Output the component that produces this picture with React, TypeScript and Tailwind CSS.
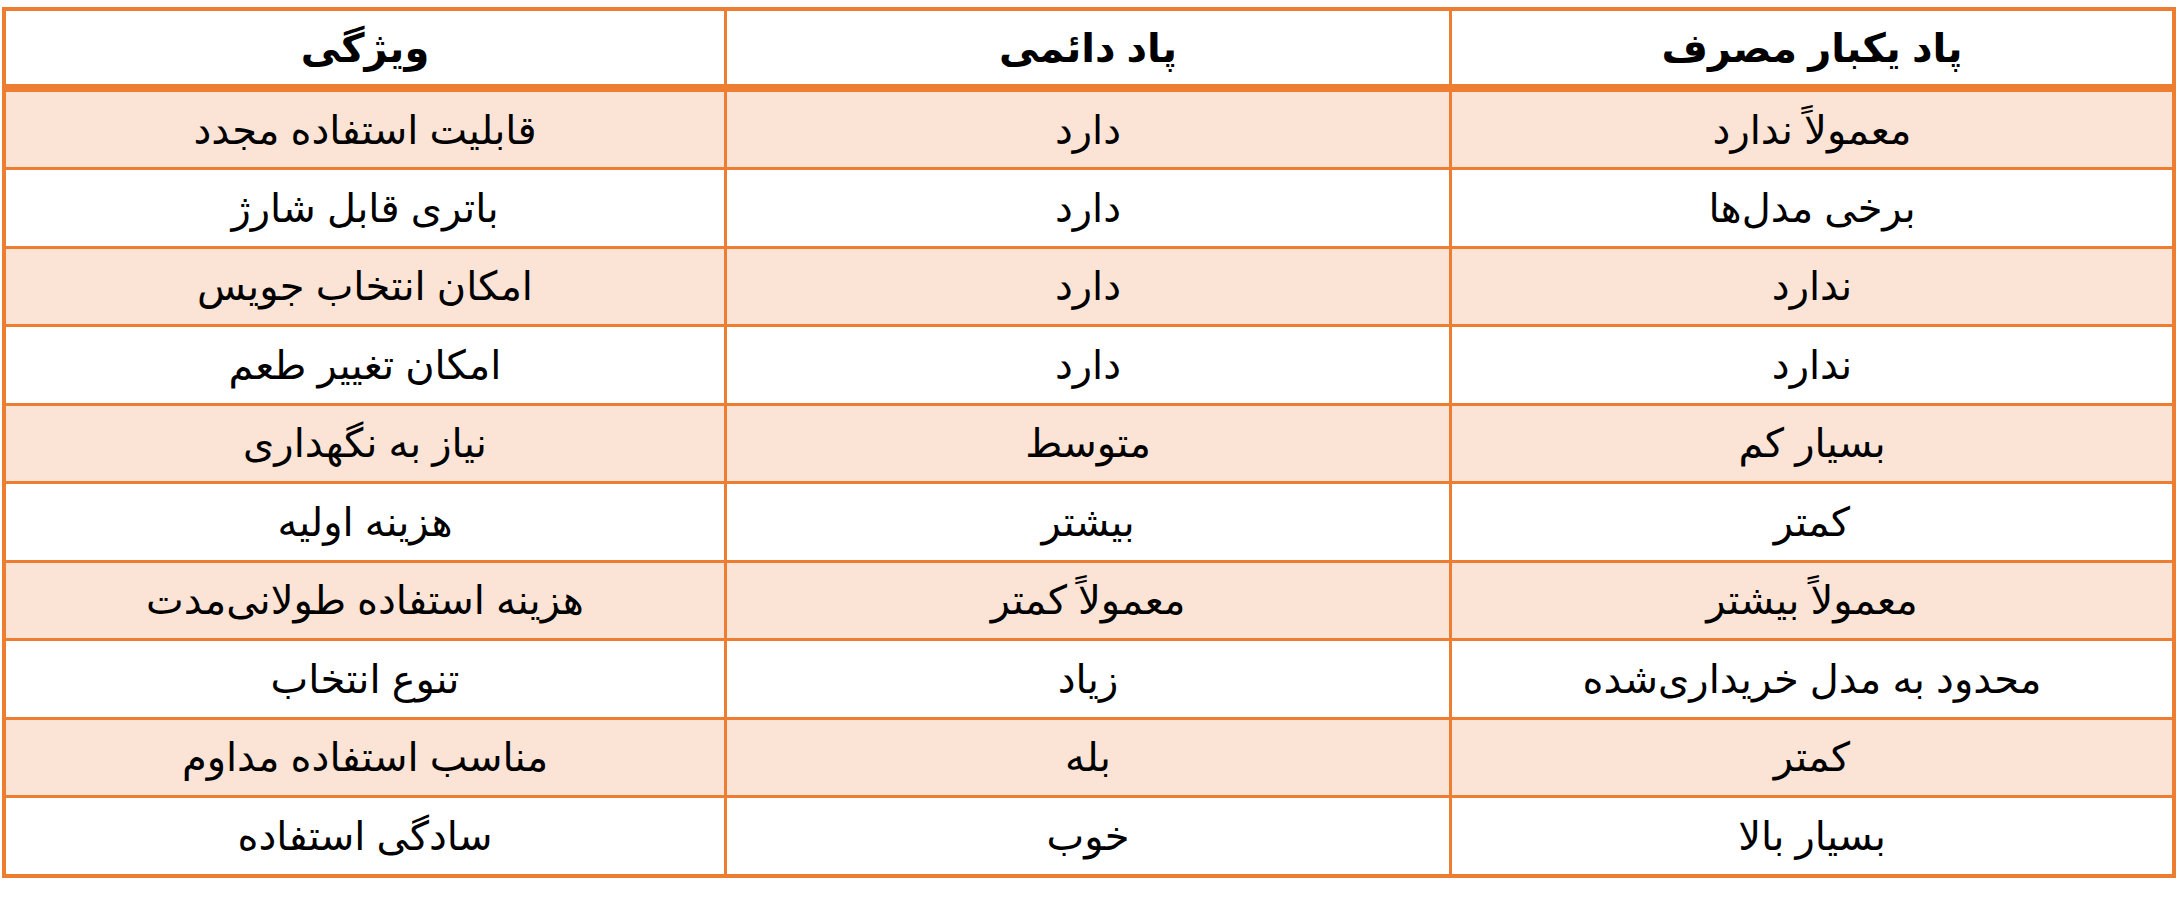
const rows: [string, string, string][] = [
  ["قابلیت استفاده مجدد", "دارد", "معمولاً ندارد"],
  ["باتری قابل شارژ", "دارد", "برخی مدل‌ها"],
  ["امکان انتخاب جویس", "دارد", "ندارد"],
  ["امکان تغییر طعم", "دارد", "ندارد"],
  ["نیاز به نگهداری", "متوسط", "بسیار کم"],
  ["هزینه اولیه", "بیشتر", "کمتر"],
  ["هزینه استفاده طولانی‌مدت", "معمولاً کمتر", "معمولاً بیشتر"],
  ["تنوع انتخاب", "زیاد", "محدود به مدل خریداری‌شده"],
  ["مناسب استفاده مداوم", "بله", "کمتر"],
  ["سادگی استفاده", "خوب", "بسیار بالا"],
];

const font = { fontFamily: '"Liberation Sans", "DejaVu Sans", sans-serif' };

function Cell({ text, first, bold }: { text: string; first?: boolean; bold?: boolean }) {
  return (
    <div
      dir="rtl"
      className={`flex items-center justify-center text-[40px] leading-none text-black ${
        first ? "" : "border-l-[3px] border-[#ED7D31]"
      } ${bold ? "font-bold" : ""}`}
    >
      {text}
    </div>
  );
}

export default function App() {
  return (
    <div className="h-[904px] w-[2180px] bg-white pl-[2px] pt-[7px]" style={font}>
      <div className="w-[2174px] border-4 border-[#ED7D31]">
        <div className="grid h-[81px] grid-cols-[718px_725px_1fr] border-b-[8px] border-[#ED7D31]">
          <Cell text="ویژگی" first bold />
          <Cell text="پاد دائمی" bold />
          <Cell text="پاد یکبار مصرف" bold />
        </div>
        {rows.map((r, i) => (
          <div
            key={i}
            className={`grid grid-cols-[718px_725px_1fr] ${
              i === 0 ? "h-[75px]" : "h-[78.5px] border-t-[3px] border-[#ED7D31]"
            } ${i % 2 === 0 ? "bg-[#FBE4D5]" : "bg-white"}`}
          >
            <Cell text={r[0]} first />
            <Cell text={r[1]} />
            <Cell text={r[2]} />
          </div>
        ))}
      </div>
    </div>
  );
}
